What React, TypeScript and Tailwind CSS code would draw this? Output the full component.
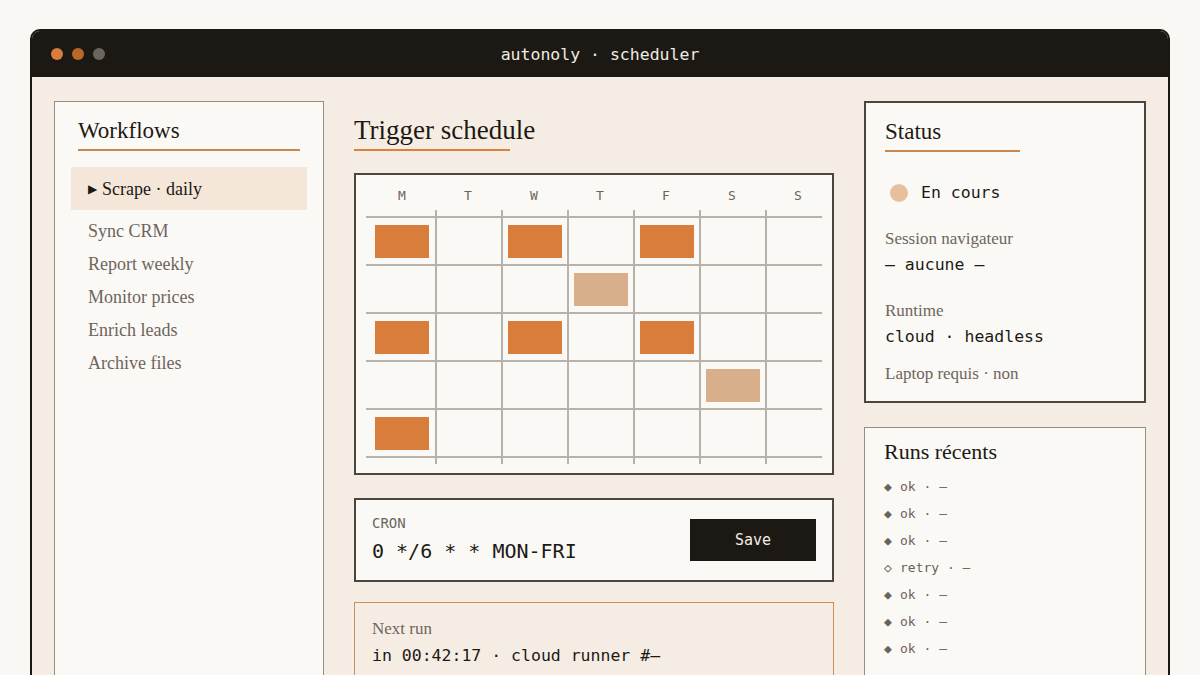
import React from "react";

const serif = "font-['Liberation_Serif','Times_New_Roman',serif]";
const mono = "font-['DejaVu_Sans_Mono','Liberation_Mono',monospace]";

const days = ["M", "T", "W", "T", "F", "S", "S"];

// 0 = empty, 1 = scheduled, 2 = skipped / pending
const grid = [
  [1, 0, 1, 0, 1, 0, 0],
  [0, 0, 0, 2, 0, 0, 0],
  [1, 0, 1, 0, 1, 0, 0],
  [0, 0, 0, 0, 0, 2, 0],
  [1, 0, 0, 0, 0, 0, 0],
];

const workflows = ["Sync CRM", "Report weekly", "Monitor prices", "Enrich leads", "Archive files"];

const runs = [
  { mark: "◆", label: "ok" },
  { mark: "◆", label: "ok" },
  { mark: "◆", label: "ok" },
  { mark: "◇", label: "retry" },
  { mark: "◆", label: "ok" },
  { mark: "◆", label: "ok" },
  { mark: "◆", label: "ok" },
];

function Sidebar() {
  return (
    <aside className="w-[270px] shrink-0 border-[1.5px] border-[#948e84] bg-[#fbf9f6] h-[620px]">
      <div className="px-[23px] pt-[14px]">
        <h2 className={`${serif} text-[23px] leading-[30px] text-[#1c1914]`}>Workflows</h2>
        <div className="mt-[3px] h-[2px] bg-[#c8874c]" />
      </div>
      <div className="px-[16px] mt-[16px]">
        <div className={`${serif} h-[43px] flex items-center pl-[17px] pt-[1px] bg-[#f5e6da] text-[18px] text-[#1c1914]`}>
          <span className="text-[12px] mr-[5px]">▶</span>
          Scrape · daily
        </div>
        <ul className="mt-[5px]">
          {workflows.map((w) => (
            <li key={w} className={`${serif} h-[33px] flex items-center pl-[17px] text-[18px] text-[#6e655c]`}>
              {w}
            </li>
          ))}
        </ul>
      </div>
    </aside>
  );
}

function Calendar() {
  return (
    <div className="border-2 border-[#4a463f] bg-[#fbf9f6] pb-[9px]">
      <div className={`${mono} flex pl-[13px] pt-[13px] pb-[6px] text-[13px] leading-[16px] text-[#6b655d]`}>
        {days.map((d, i) => (
          <div key={i} className="w-[66px] shrink-0 text-center">
            {d}
          </div>
        ))}
      </div>
      <div className="flex pl-[13px] h-[6px]">
        {days.map((_, i) => (
          <div key={i} className={`w-[66px] shrink-0 ${i > 0 ? "border-l-2 border-[#b8b3aa]" : ""}`} />
        ))}
      </div>
      {grid.map((row, r) => (
        <div
          key={r}
          className={`ml-[10px] w-[456px] border-t-2 border-[#b8b3aa] ${r === grid.length - 1 ? "border-b-2" : ""}`}
        >
          <div className="flex ml-[3px] h-[46px]">
            {row.map((v, c) => (
              <div
                key={c}
                className={`w-[66px] shrink-0 flex items-center justify-center ${c > 0 ? "border-l-2 border-[#b8b3aa]" : ""}`}
              >
                {v === 1 && <div className="w-[54px] h-[33px] bg-[#d97d3c]" />}
                {v === 2 && <div className="w-[54px] h-[33px] bg-[#d8af8a]" />}
              </div>
            ))}
          </div>
        </div>
      ))}
      <div className="flex pl-[13px] h-[6px]">
        {days.map((_, i) => (
          <div key={i} className={`w-[66px] shrink-0 ${i > 0 ? "border-l-2 border-[#b8b3aa]" : ""}`} />
        ))}
      </div>
    </div>
  );
}

function Schedule() {
  return (
    <main className="w-[480px] shrink-0">
      <h1 className={`${serif} text-[27px] leading-[34px] text-[#1c1914] mt-[12px]`}>Trigger schedule</h1>
      <div className="mt-[2px] w-[156px] h-[2px] bg-[#dc8040]" />
      <div className="mt-[22px]">
        <Calendar />
      </div>
      <div className="mt-[23px] border-2 border-[#4a463f] bg-[#fbf9f6] h-[84px] px-[16px] flex items-center justify-between">
        <div className="-mt-[4px]">
          <div className={`${mono} text-[14px] leading-[18px] text-[#6b655d]`}>CRON</div>
          <div className={`${mono} mt-[7px] text-[20px] leading-[24px] text-[#1c1914]`}>0 */6 * * MON-FRI</div>
        </div>
        <button className={`${mono} w-[126px] h-[42px] pt-[1px] bg-[#1c1914] text-[#f3ece2] text-[15px]`}>Save</button>
      </div>
      <div className="mt-[20px] border-[1.5px] border-[#c9905c] bg-[#f5ede3] px-[17px] pt-[15px] pb-[14px]">
        <div className={`${serif} text-[17px] leading-[22px] text-[#6e655c]`}>Next run</div>
        <div className={`${mono} mt-[5px] text-[16.5px] leading-[22px] text-[#1c1914]`}>
          in 00:42:17 · cloud runner #—
        </div>
      </div>
    </main>
  );
}

function StatusCard() {
  return (
    <section className="border-2 border-[#4a463f] bg-[#fbf9f6] px-[19px] pt-[14px] pb-[16px]">
      <h2 className={`${serif} text-[23px] leading-[30px] text-[#1c1914]`}>Status</h2>
      <div className="mt-[3px] w-[135px] h-[2px] bg-[#c8874c]" />
      <div className="mt-[30px] h-[22px] flex items-center pl-[5px]">
        <span className="w-[18px] h-[18px] rounded-full bg-[#e8bf9c]" />
        <span className={`${mono} ml-[13px] text-[16.5px] text-[#1c1914]`}>En cours</span>
      </div>
      <div className={`${serif} mt-[24px] text-[17px] leading-[22px] text-[#6e655c]`}>Session navigateur</div>
      <div className={`${mono} mt-[4px] text-[16.5px] leading-[22px] text-[#1c1914]`}>— aucune —</div>
      <div className={`${serif} mt-[24px] text-[17px] leading-[22px] text-[#6e655c]`}>Runtime</div>
      <div className={`${mono} mt-[4px] text-[16.5px] leading-[22px] text-[#1c1914]`}>cloud · headless</div>
      <div className={`${serif} mt-[15px] text-[17px] leading-[22px] text-[#6e655c]`}>Laptop requis · non</div>
    </section>
  );
}

function RecentRuns() {
  return (
    <section className="mt-[24px] border-[1.5px] border-[#948e84] bg-[#fbf9f6] px-[19px] pt-[10px] h-[260px]">
      <h2 className={`${serif} text-[22px] leading-[28px] text-[#1c1914]`}>Runs récents</h2>
      <ul className="mt-[7px]">
        {runs.map((r, i) => (
          <li key={i} className={`${mono} h-[27px] flex items-center text-[13px] text-[#6b625a]`}>
            <span className="w-[16px] text-[13px]">{r.mark}</span>
            {r.label} · —
          </li>
        ))}
      </ul>
    </section>
  );
}

export default function App() {
  return (
    <div className="h-[675px] overflow-hidden bg-[#faf8f4] pt-[29px] px-[30px]">
      <div className="h-[700px] rounded-t-[10px] border-2 border-[#1c1914] bg-[#f5ede3] overflow-hidden">
        {/* title bar */}
        <div className="h-[46px] bg-[#1c1914] flex items-center px-[19px]">
          <div className="flex gap-[9px]">
            <span className="w-[12px] h-[12px] rounded-full bg-[#d97d3c]" />
            <span className="w-[12px] h-[12px] rounded-full bg-[#b8692a]" />
            <span className="w-[12px] h-[12px] rounded-full bg-[#6b655d]" />
          </div>
          <div className={`${mono} flex-1 text-center pt-[2px] text-[16.5px] text-[#f0ebe2] pr-[54px]`}>
            autonoly · scheduler
          </div>
        </div>
        <div className="flex gap-[30px] px-[22px] pt-[24px]">
          <Sidebar />
          <Schedule />
          <div className="w-[282px] shrink-0">
            <StatusCard />
            <RecentRuns />
          </div>
        </div>
      </div>
    </div>
  );
}
